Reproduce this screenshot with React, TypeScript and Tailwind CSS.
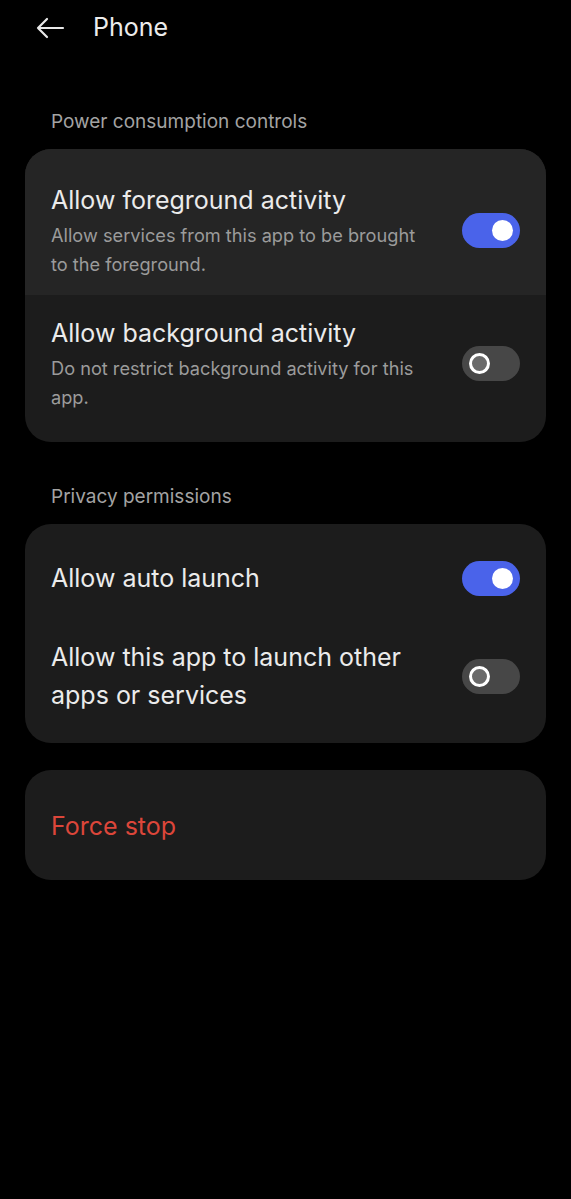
import { ReactNode } from "react";

function Toggle({ on }: { on: boolean }) {
  return on ? (
    <div className="flex h-[35px] w-[58px] shrink-0 items-center justify-end rounded-full bg-[#4a63ea] pr-[7px]">
      <div className="h-[21px] w-[21px] rounded-full bg-white" />
    </div>
  ) : (
    <div className="flex h-[35px] w-[58px] shrink-0 items-center rounded-full bg-[#474747] pl-[7px]">
      <div className="h-[21px] w-[21px] rounded-full border-[3px] border-white bg-[#6a6a6a]" />
    </div>
  );
}

function Row({
  title,
  sub,
  on,
  className,
}: {
  title: ReactNode;
  sub?: string;
  on: boolean;
  className: string;
}) {
  return (
    <div className={`flex items-center gap-6 pl-[26px] pr-[26px] ${className}`}>
      <div className="grow">
        <p className="text-[25px] leading-[38px] text-[#ebebeb]">{title}</p>
        {sub && (
          <p className="mt-[2px] pr-4 text-[18.2px] leading-[29px] text-[#9b9b9b]">
            {sub}
          </p>
        )}
      </div>
      <Toggle on={on} />
    </div>
  );
}

export default function App() {
  return (
    <div
      className="min-h-[1199px] w-full bg-black pb-10"
      style={{ fontFamily: "Inter, 'Noto Sans', sans-serif" }}
    >
      <header className="flex h-[56px] items-center">
        <svg
          width="30"
          height="22"
          viewBox="0 0 30 22"
          className="ml-[35px]"
          fill="none"
          stroke="#e8e8e8"
          strokeWidth="2.2"
          strokeLinecap="round"
          strokeLinejoin="round"
        >
          <path d="M28 11H3M12 2L3 11l9 9" />
        </svg>
        <h1 className="ml-[28px] text-[25px] text-[#ececec]">Phone</h1>
      </header>

      <p className="mt-[54px] pl-[51px] text-[19px] leading-[24px] text-[#a3a3a3]">
        Power consumption controls
      </p>
      <div className="mx-[25px] mt-[15px] overflow-hidden rounded-[26px] bg-[#1c1c1c]">
        <Row
          title="Allow foreground activity"
          sub="Allow services from this app to be brought to the foreground."
          on
          className="bg-[#252525] pt-[32px] pb-[16px]"
        />
        <Row
          title="Allow background activity"
          sub="Do not restrict background activity for this app."
          on={false}
          className="pt-[19px] pb-[30px]"
        />
      </div>

      <p className="mt-[43px] pl-[51px] text-[19px] leading-[24px] text-[#a3a3a3]">
        Privacy permissions
      </p>
      <div className="mx-[25px] mt-[15px] rounded-[26px] bg-[#1c1c1c]">
        <Row title="Allow auto launch" on className="pt-[35px]" />
        <Row
          title={
            <>
              Allow this app to launch other
              <br />
              apps or services
            </>
          }
          on={false}
          className="pt-[41px] pb-[29px]"
        />
      </div>

      <div className="mx-[25px] mt-[27px] flex h-[110px] items-center rounded-[26px] bg-[#1c1c1c] pl-[26px]">
        <p className="mt-[3px] text-[25px] text-[#dc463a]">Force stop</p>
      </div>
    </div>
  );
}
